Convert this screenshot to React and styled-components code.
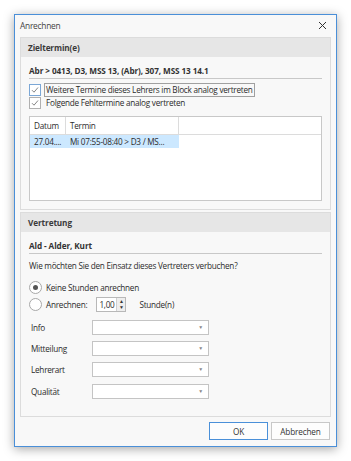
import styled, { createGlobalStyle } from "styled-components";

const Global = createGlobalStyle`
  html, body {
    margin: 0;
    background: #ffffff;
  }
  body {
    padding: 14px;
    font-family: "Open Sans", "Noto Sans", sans-serif;
    font-size: 8.2px;
    letter-spacing: -0.25px;
    color: #2b2b2b;
  }
`;

const Dialog = styled.div`
  width: 321px;
  height: 431px;
  border: 1px solid #4a8fd8;
  background: #f8f8f8;
  box-shadow: 0 2px 10px rgba(0, 0, 0, 0.35);
  display: flex;
  flex-direction: column;
`;

const TitleBar = styled.div`
  height: 22px;
  display: flex;
  align-items: center;
  justify-content: space-between;
  padding: 0 9px 0 5px;
  font-size: 8.4px;
  color: #444;
`;

const Content = styled.div`
  flex: 1;
  display: flex;
  flex-direction: column;
  gap: 2px;
  padding: 0 5px 0 5px;
`;

const Panel = styled.section`
  border: 1px solid #dcdcdc;
  background: #f8f8f8;
  height: ${(p) => p.h}px;
  box-sizing: border-box;
  display: flex;
  flex-direction: column;
`;

const PanelHeader = styled.div`
  height: 19px;
  flex: none;
  background: #e6e6e6;
  display: flex;
  align-items: center;
  padding-left: 7px;
  font-weight: 700;
  letter-spacing: -0.1px;
  color: #3a3a3a;
`;

const PanelBody = styled.div`
  padding: 8px 8px 0 8px;
  display: flex;
  flex-direction: column;
`;

const SubTitle = styled.div`
  font-weight: 700;
  letter-spacing: -0.1px;
  color: #333;
  padding-bottom: 2px;
  border-bottom: 1px solid #c8c8c8;
  line-height: 11px;
`;

const CheckRow = styled.label`
  display: flex;
  align-items: center;
  gap: 3px;
  height: 13px;
  margin-top: ${(p) => p.mt || 0}px;
`;

const Box = styled.span`
  width: 10px;
  height: 10px;
  border: 1px solid ${(p) => (p.focused ? "#7ba7d6" : "#b0b0b0")};
  background: #fff;
  display: flex;
  align-items: center;
  justify-content: center;
  flex: none;
`;

const CheckText = styled.span`
  padding: 1px 1px;
  border: 1px solid ${(p) => (p.focused ? "#a0a0a0" : "transparent")};
  line-height: 10px;
`;

const Table = styled.div`
  margin-top: 6px;
  height: 85px;
  border: 1px solid #c8c8c8;
  background: #fff;
  box-sizing: border-box;
`;

const Row = styled.div`
  display: grid;
  grid-template-columns: 36px 113px 1fr;
  height: ${(p) => (p.head ? 17 : 13)}px;
  border-bottom: ${(p) => (p.head ? "1px solid #dcdcdc" : "none")};
`;

const Cell = styled.div`
  display: flex;
  align-items: center;
  padding-left: 4px;
  border-right: ${(p) => (p.sep ? "1px solid #dcdcdc" : "none")};
  background: ${(p) => (p.sel ? "#cce8ff" : "transparent")};
  white-space: nowrap;
  overflow: hidden;
`;

const Question = styled.div`
  margin-top: 6px;
  line-height: 11px;
`;

const RadioRow = styled.div`
  display: flex;
  align-items: center;
  gap: 4px;
  height: 15px;
  margin-top: ${(p) => p.mt || 0}px;
`;

const Radio = styled.span`
  width: 11px;
  height: 11px;
  border-radius: 50%;
  border: 1px solid #a8a8a8;
  background: #fff;
  display: flex;
  align-items: center;
  justify-content: center;
  flex: none;
  &::after {
    content: "";
    width: 5px;
    height: 5px;
    border-radius: 50%;
    background: ${(p) => (p.checked ? "#555" : "transparent")};
  }
`;

const Spinner = styled.div`
  margin-left: 5px;
  width: 30px;
  height: 15px;
  border: 1px solid #b8b8b8;
  background: #fff;
  box-sizing: border-box;
  display: flex;
  align-items: center;
  padding-left: 2px;
  justify-content: space-between;
`;

const SpinBtns = styled.div`
  width: 8px;
  height: 13px;
  display: flex;
  flex-direction: column;
  border-left: 1px solid #d0d0d0;
  & > span {
    flex: 1;
    display: flex;
    align-items: center;
    justify-content: center;
    font-size: 5px;
    color: #333;
    background: #eee;
  }
`;

const Unit = styled.span`
  margin-left: 9px;
`;

const FormRow = styled.div`
  display: grid;
  grid-template-columns: 61px 117px;
  align-items: center;
  height: 15px;
  margin-top: ${(p) => p.mt}px;
  padding-left: 2px;
`;

const Combo = styled.div`
  height: 15px;
  border: 1px solid #c4c4c4;
  background: #fff;
  box-sizing: border-box;
  display: flex;
  align-items: center;
  justify-content: flex-end;
  padding-right: 5px;
  color: #888;
  font-size: 5px;
`;

const Footer = styled.div`
  height: 30px;
  display: flex;
  justify-content: flex-end;
  align-items: center;
  gap: 3px;
  padding-right: 6px;
`;

const Button = styled.button`
  width: ${(p) => p.w}px;
  height: 18px;
  font-family: inherit;
  font-size: 8.2px;
  letter-spacing: -0.15px;
  color: #333;
  background: #fdfdfd;
  border: 1px solid ${(p) => (p.primary ? "#4a90d9" : "#c8c8c8")};
  padding: 0;
`;

function Check({ text, focused, mt }) {
  return (
    <CheckRow mt={mt}>
      <Box focused={focused}>
        <svg width="8" height="8" viewBox="0 0 8 8">
          <path d="M1 4.2 L3 6.2 L7 1.5" fill="none" stroke="#777" strokeWidth="0.9" />
        </svg>
      </Box>
      <CheckText focused={focused}>{text}</CheckText>
    </CheckRow>
  );
}

function Field({ label, mt }) {
  return (
    <FormRow mt={mt}>
      <span>{label}</span>
      <Combo>▼</Combo>
    </FormRow>
  );
}

export default function App() {
  return (
    <>
      <Global />
      <Dialog>
        <TitleBar>
          <span>Anrechnen</span>
          <svg width="9" height="9" viewBox="0 0 9 9">
            <path d="M1 1 L8 8 M8 1 L1 8" stroke="#333" strokeWidth="1" />
          </svg>
        </TitleBar>
        <Content>
          <Panel h={173}>
            <PanelHeader>Zieltermin(e)</PanelHeader>
            <PanelBody>
              <SubTitle>Abr &gt; 0413, D3, MSS 13, (Abr), 307, MSS 13 14.1</SubTitle>
              <Check mt={5} focused text="Weitere Termine dieses Lehrers im Block analog vertreten" />
              <Check text="Folgende Fehltermine analog vertreten" />
              <Table>
                <Row head>
                  <Cell sep>Datum</Cell>
                  <Cell sep>Termin</Cell>
                  <Cell />
                </Row>
                <Row>
                  <Cell sel>27.04....</Cell>
                  <Cell sel>Mi 07:55-08:40 &gt; D3 / MS...</Cell>
                  <Cell />
                </Row>
              </Table>
            </PanelBody>
          </Panel>
          <Panel h={205}>
            <PanelHeader>Vertretung</PanelHeader>
            <PanelBody>
              <SubTitle>Ald - Alder, Kurt</SubTitle>
              <Question>Wie möchten Sie den Einsatz dieses Vertreters verbuchen?</Question>
              <RadioRow mt={9}>
                <Radio checked />
                <span>Keine Stunden anrechnen</span>
              </RadioRow>
              <RadioRow mt={2}>
                <Radio />
                <span>Anrechnen:</span>
                <Spinner>
                  <span>1,00</span>
                  <SpinBtns>
                    <span>▲</span>
                    <span>▼</span>
                  </SpinBtns>
                </Spinner>
                <Unit>Stunde(n)</Unit>
              </RadioRow>
              <Field label="Info" mt={8} />
              <Field label="Mitteilung" mt={6} />
              <Field label="Lehrerart" mt={6} />
              <Field label="Qualität" mt={7} />
            </PanelBody>
          </Panel>
        </Content>
        <Footer>
          <Button primary w={59}>OK</Button>
          <Button w={59}>Abbrechen</Button>
        </Footer>
      </Dialog>
    </>
  );
}
